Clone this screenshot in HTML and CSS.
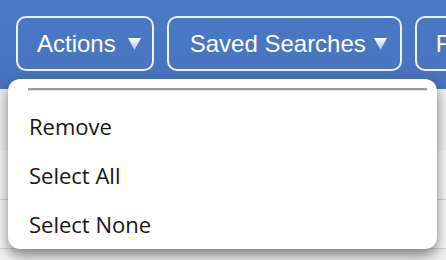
FILE: index.html
```html
<!DOCTYPE html>
<html lang="en">
<head>
    <meta charset="UTF-8">
    <title>Search Results</title>
    <link rel="stylesheet" href="styles.css">
</head>
<body>
    <div class="toolbar">
        <button class="tb-btn">Actions
            <svg class="caret" width="13" height="12" viewBox="0 0 13 12">
                <defs>
                    <linearGradient id="fade1" x1="0" y1="0" x2="0" y2="1">
                        <stop offset="0" stop-color="#fff"/>
                        <stop offset="1" stop-color="#fff" stop-opacity="0.55"/>
                    </linearGradient>
                </defs>
                <polygon points="0,0 13,0 6.5,12" fill="url(#fade1)"/>
            </svg>
        </button>
        <button class="tb-btn saved">Saved Searches
            <svg class="caret" width="13" height="12" viewBox="0 0 13 12">
                <polygon points="0,0 13,0 6.5,12" fill="url(#fade1)"/>
            </svg>
        </button>
        <button class="tb-btn">Filter</button>
    </div>

    <div class="page">
        <div class="row"></div>
        <div class="row"></div>
    </div>

    <div class="menu">
        <div class="menu-rule"></div>
        <ul class="menu-list">
            <li>Remove</li>
            <li>Select All</li>
            <li>Select None</li>
        </ul>
    </div>
</body>
</html>
```

FILE: styles.css
```css
body {
    margin: 0;
    background: #f2f2f2;
    font-family: "Liberation Sans", Arial, sans-serif;
    overflow: hidden;
    height: 260px;
}
.toolbar {
    display: flex;
    gap: 13px;
    height: 89px;
    padding: 16px 0 0 16px;
    box-sizing: border-box;
    background: linear-gradient(#4b79c6, #4873be);
    overflow: hidden;
    white-space: nowrap;
}
.tb-btn {
    display: flex;
    align-items: center;
    flex-shrink: 0;
    height: 55px;
    padding: 0 11px 0 19px;
    border: 2px solid #eef2fa;
    border-radius: 10px;
    background: transparent;
    color: white;
    font-family: "Liberation Sans", Arial, sans-serif;
    font-size: 24px;
    line-height: 28px;
}
.tb-btn.saved {
    padding: 0 13px 0 21px;
}
.caret {
    margin-left: 12px;
    margin-top: 1px;
}
.saved .caret {
    margin-left: 8px;
}
.page {
    padding-top: 62px;
}
.row {
    height: 48px;
    border-bottom: 1px solid #d6d6d6;
    background: #fafafa;
}
.menu {
    position: absolute;
    left: 8px;
    top: 79px;
    width: 429px;
    height: 170px;
    background: white;
    border-radius: 12px;
    box-shadow: 0 6px 14px rgba(0, 0, 0, 0.5);
    box-sizing: border-box;
    padding: 9px 10px 0 20px;
}
.menu-rule {
    border-top: 2px solid #9c9c9c;
    border-bottom: 1px solid #e4e4e4;
}
.menu-list {
    list-style: none;
    margin: 0;
    padding: 11px 0 0 1px;
    font-family: "Open Sans", sans-serif;
    font-size: 22px;
    line-height: 49px;
    color: #161616;
}
```
